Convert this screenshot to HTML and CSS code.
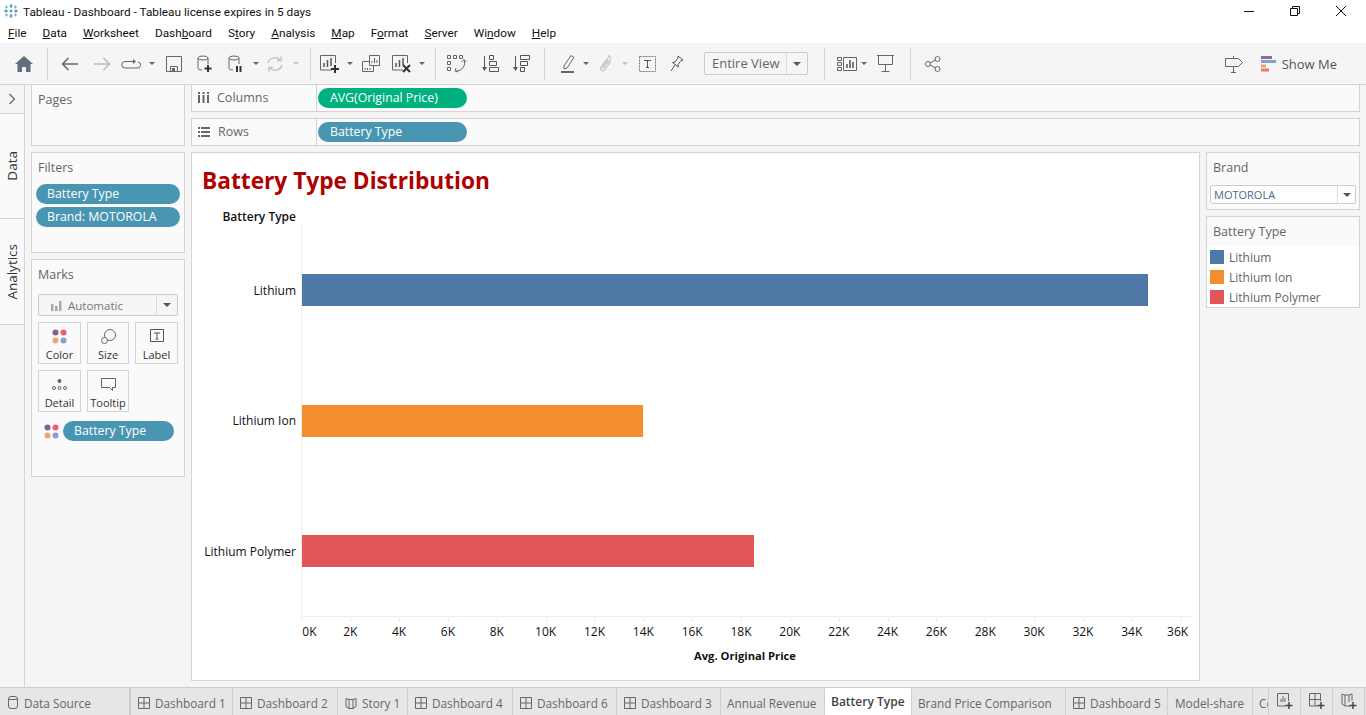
FILE: index.html
```html
<!DOCTYPE html>
<html lang="en">
<head>
  <meta charset="UTF-8">
  <title>Tableau - Dashboard - Tableau license expires in 5 days</title>
  <link rel="stylesheet" href="styles.css">
</head>
<body>
  <!-- window title -->
  <header class="titlebar">
    <svg class="app-icon" width="16" height="16" viewBox="0 0 16 16" fill="none" stroke="#2f7fa8" stroke-width="1">
      <path d="M8 1v4M6.500 3h3M8 11v4M6.500 13h3M1 8h4M3 6.500v3M11 8h4M13 6.500v3M8 6.500v3M6.500 8h3" />
      <path d="M3.500 2.500v3M2 4h3M12.500 2.500v3M11 4h3M3.500 10.500v3M2 12h3M12.500 10.500v3M11 12h3" stroke="#6fb0cf" />
    </svg>
    <span class="title-text">Tableau - Dashboard - Tableau license expires in 5 days</span>
    <div class="win-controls">
      <svg width="12" height="12" viewBox="0 0 12 12" stroke="#111" fill="none"><path d="M1 6.500h10" /></svg>
      <svg width="12" height="12" viewBox="0 0 12 12" stroke="#111" fill="none"><path d="M1.500 3.500h7v7h-7zM3.500 3.500v-2h7v7h-2" /></svg>
      <svg width="12" height="12" viewBox="0 0 12 12" stroke="#111" fill="none"><path d="M1 1l10 10M11 1L1 11" /></svg>
    </div>
  </header>

  <nav class="menubar">
    <span><u>F</u>ile</span>
    <span><u>D</u>ata</span>
    <span><u>W</u>orksheet</span>
    <span>Dash<u>b</u>oard</span>
    <span>S<u>t</u>ory</span>
    <span><u>A</u>nalysis</span>
    <span><u>M</u>ap</span>
    <span>F<u>o</u>rmat</span>
    <span><u>S</u>erver</span>
    <span>Wi<u>n</u>dow</span>
    <span><u>H</u>elp</span>
  </nav>

  <!-- toolbar -->
  <div class="toolbar">
    <span class="tool w30"><svg width="18" height="16" viewBox="0 0 18 16" fill="#5f6f7f"><path d="M9 0L0 8h2.500v8h4.500v-5h4v5h4.500V8H18z" /></svg></span>
    <i class="sep"></i>
    <span class="tool w36"><svg width="18" height="14" viewBox="0 0 18 14" fill="none" stroke="#666" stroke-width="1.500"><path d="M17 7H2M7.500 1L1.500 7l6 6" /></svg></span>
    <span class="tool w28"><svg width="18" height="14" viewBox="0 0 18 14" fill="none" stroke="#bbb" stroke-width="1.500"><path d="M1 7h15M10.500 1l6 6-6 6" /></svg></span>
    <span class="tool w30"><svg width="20" height="12" viewBox="0 0 20 12" fill="none" stroke="#666"><path d="M12 3.500H4a3 3 0 0 0 0 6.500h12a3 3 0 0 0 1-6" /><path d="M12 1l3 2.500L12 6z" fill="#666" stroke="none" /></svg></span>
    <span class="caret w12"></span>
    <span class="tool w32"><svg width="16" height="16" viewBox="0 0 16 16" fill="none" stroke="#666"><path d="M.5.500h15v15H.500zM4.500 15.500v-5h7v5" /><path d="M6 12h3v3H6z" fill="#666" stroke="none" /></svg></span>
    <span class="tool w30"><svg width="16" height="18" viewBox="0 0 16 18" fill="none" stroke="#666"><ellipse cx="6" cy="3" rx="5" ry="2" /><path d="M1 3v10c0 1 1 2 4 2M11 3v6" /><path d="M11 10v7M7.500 13.500h7" stroke="#333" stroke-width="2" /></svg></span>
    <span class="tool w32"><svg width="16" height="18" viewBox="0 0 16 18" fill="none" stroke="#666"><ellipse cx="6" cy="3" rx="5" ry="2" /><path d="M1 3v10c0 1 1 2 4 2M11 3v6" /><path d="M9 11v6M12.500 11v6" stroke="#333" stroke-width="2" /></svg></span>
    <span class="caret w8"></span>
    <span class="tool w30"><svg width="18" height="16" viewBox="0 0 18 16" fill="none" stroke="#c4c4c4" stroke-width="1.500"><path d="M2 7a7 6.500 0 0 1 12-3M16 9a7 6.500 0 0 1-12 3" /><path d="M15 .500v4h-4M3 15.500v-4h4" /></svg></span>
    <span class="caret w12 off"></span>
    <i class="sep"></i>
    <span class="tool w30"><svg width="21" height="20" viewBox="0 0 21 20" fill="none" stroke="#666"><path d="M12 16H.500V1.500h15V9" /><path d="M4 9v4M7.500 6v7M11 4v8" stroke="#555" stroke-width="1.500" /><path d="M15 11v8M11 15h8" stroke="#333" stroke-width="2" /></svg></span>
    <span class="caret w10"></span>
    <span class="tool w32"><svg width="18" height="17" viewBox="0 0 18 17" fill="none" stroke="#666"><path d="M.5 6.500h11v10H.500z" /><path d="M7.500.500h10v10h-10z" fill="#f5f5f5" /><path d="M10 8V6M12.500 8V3M15 8V5M3 15v-2M5.500 15v-2M8 15v-2" /></svg></span>
    <span class="tool w30"><svg width="21" height="20" viewBox="0 0 21 20" fill="none" stroke="#666"><path d="M11 16H.500V1.500h15V9" /><path d="M4 9v4M7.500 6v7M11 4v7" stroke="#555" stroke-width="1.500" /><path d="M11 11l7 7M18 11l-7 7" stroke="#333" stroke-width="2" /></svg></span>
    <span class="caret w10"></span>
    <i class="sep"></i>
    <span class="tool w34"><svg width="20" height="18" viewBox="0 0 20 18" fill="none" stroke="#666"><path d="M.5.500h3v3h-3zM6.500.500h3v3h-3zM12.500.500h3v3h-3zM.5 6.500h3v3h-3zM.5 12.500h3v3h-3z" /><path d="M17 5a8 8 0 0 1-8 11M9 13l-1 3 3 1M14.500 7L17 4.500 19.500 7" /></svg></span>
    <span class="tool w32"><svg width="18" height="17" viewBox="0 0 18 17" fill="none" stroke="#555"><path d="M3.500 1v14" /><path d="M1 12l2.500 4L6 12z" fill="#555" stroke="none" /><path d="M8.500.500h4v4h-4zM8.500 6.500h7v4h-7zM8.500 12.500h9v4h-9z" /></svg></span>
    <span class="tool w30"><svg width="18" height="17" viewBox="0 0 18 17" fill="none" stroke="#555"><path d="M3.500 1v14" /><path d="M1 12l2.500 4L6 12z" fill="#555" stroke="none" /><path d="M8.500.500h9v4h-9zM8.500 6.500h7v4h-7zM8.500 12.500h4v4h-4z" /></svg></span>
    <i class="sep sep-wide"></i>
    <span class="tool w28"><svg width="14" height="19" viewBox="0 0 14 19" fill="none" stroke="#666"><path d="M3 12L10 1.500l3 2L6 14l-3 1z" /><path d="M0 18h13" stroke-width="2" /></svg></span>
    <span class="caret w8"></span>
    <span class="tool w30"><svg width="13" height="18" viewBox="0 0 13 18" fill="none" stroke="#c4c4c4" stroke-width="1.200"><path d="M10 1.500L2 12c-1.500 2.500 1.500 5 3.500 3L12 6M9 1c2-.5 3 1.500 2.500 3L5 12.500c-1 1-2 0-1.500-1L9 5" /></svg></span>
    <span class="caret w10 off"></span>
    <span class="tool w34"><svg width="17" height="16" viewBox="0 0 17 16" fill="none" stroke="#777" stroke-dasharray="2 1"><path d="M.5.500h16v15H.500z" /><path d="M5 4.500h7M8.500 4.500v7M7 11.500h3" stroke-dasharray="none" stroke="#555" /></svg></span>
    <span class="tool w26"><svg width="14" height="17" viewBox="0 0 14 17" fill="none" stroke="#555"><path d="M8 1l5 4-2 .5-3 4 .5 2.500L2.500 7.500 5 7l3-4zM5 10l-4 6" /></svg></span>
    <div class="combo view-combo">
      <span class="combo-text">Entire View</span>
      <span class="combo-arrow"><b></b></span>
    </div>
    <i class="sep sep-chart"></i>
    <span class="tool w26"><svg width="20" height="14" viewBox="0 0 20 14" fill="none" stroke="#666"><path d="M.5.500h4v3h-4zM.5 5.500h4v3h-4zM.5 10.500h4v3h-4zM6.500.500h13v13h-13z" /><path d="M10 11V7M13 11V3M16 11V5" stroke-width="1.500" stroke="#555" /></svg></span>
    <span class="caret w8"></span>
    <span class="tool w34"><svg width="17" height="17" viewBox="0 0 17 17" fill="none" stroke="#666"><path d="M0 .500h17M1.500.500v9h14v-9M8.500 9.500v6.500M4.500 16.500h8" /></svg></span>
    <i class="sep sep-near"></i>
    <span class="tool w36"><svg width="16" height="16" viewBox="0 0 16 16" fill="none" stroke="#666"><circle cx="3" cy="8" r="2.500" /><circle cx="12.500" cy="3" r="2.500" /><circle cx="12.500" cy="13" r="2.500" /><path d="M5.200 6.800L10.300 4.200M5.200 9.200l5.100 2.600" /></svg></span>
    <div class="toolbar-right">
      <svg width="18" height="18" viewBox="0 0 18 18" fill="none" stroke="#666"><path d="M.5 3.500h13l4 4-4 4H.500zM8.500 1v2.500M8.500 11.500v6M6 17.500h5" /></svg>
      <div class="show-me">
        <svg width="15" height="16" viewBox="0 0 15 16">
          <rect width="11" height="3" fill="#8a6f98" />
          <rect y="4" width="15" height="3" fill="#7fa3cf" />
          <rect y="8.500" width="5" height="3" fill="#f0a070" />
          <rect y="12.500" width="8" height="3" fill="#f0757f" />
        </svg>
        <span>Show Me</span>
      </div>
    </div>
  </div>

  <div class="workspace">
    <!-- left rail -->
    <aside class="rail">
      <div class="rail-top"><svg width="8" height="12" viewBox="0 0 8 12" fill="none" stroke="#666" stroke-width="1.200"><path d="M1.500 1l5 5-5 5" /></svg></div>
      <div class="rail-tab rail-data"><span>Data</span></div>
      <div class="rail-tab rail-analytics"><span>Analytics</span></div>
    </aside>

    <!-- pages, filters, marks -->
    <section class="side">
      <div class="card pages-card"><h3>Pages</h3></div>
      <div class="card filters-card">
        <h3>Filters</h3>
        <div class="pill filter-pill">Battery Type</div>
        <div class="pill filter-pill">Brand: MOTOROLA</div>
      </div>
      <div class="card marks-card">
        <h3>Marks</h3>
        <div class="combo marks-combo">
          <span class="combo-text">
            <svg width="11" height="11" viewBox="0 0 11 11" fill="#aaa"><rect y="4" width="2.500" height="7" /><rect x="4" y="6" width="2.500" height="5" /><rect x="8" y="1" width="2.500" height="10" /></svg>
            Automatic
          </span>
          <span class="combo-arrow"><b></b></span>
        </div>
        <div class="marks-grid">
          <div class="mark-btn">
            <svg width="15" height="15" viewBox="0 0 15 15"><circle cx="3.500" cy="3.500" r="3" fill="#7d6591" /><circle cx="11.500" cy="3.500" r="3" fill="#ee5f6d" /><circle cx="3.500" cy="11.500" r="3" fill="#f2a36f" /><circle cx="11.500" cy="11.500" r="3" fill="#7fa3cb" /></svg>
            <span>Color</span>
          </div>
          <div class="mark-btn">
            <svg width="15" height="15" viewBox="0 0 15 15" fill="none" stroke="#666"><circle cx="9" cy="6" r="5.500" /><circle cx="3.500" cy="11.500" r="3" fill="#fafafa" /></svg>
            <span>Size</span>
          </div>
          <div class="mark-btn">
            <svg width="14" height="14" viewBox="0 0 14 14" fill="none" stroke="#555"><path d="M.5.500h13v12H.500zM4 4h6M7 4v6M5.500 10h3" /></svg>
            <span>Label</span>
          </div>
          <div class="mark-btn">
            <svg width="15" height="15" viewBox="0 0 15 15" fill="none" stroke="#666"><circle cx="7.500" cy="4" r="2" fill="#666" stroke="none" /><circle cx="2" cy="11" r="1.500" /><circle cx="7.500" cy="11" r="1.500" /><circle cx="13" cy="11" r="1.500" /></svg>
            <span>Detail</span>
          </div>
          <div class="mark-btn">
            <svg width="15" height="15" viewBox="0 0 15 15" fill="none" stroke="#666"><path d="M.5 1.500h14v9h-3v3l-3-3h-8z" /></svg>
            <span>Tooltip</span>
          </div>
        </div>
        <div class="marks-field">
          <svg width="15" height="15" viewBox="0 0 15 15"><circle cx="3.500" cy="3.500" r="3" fill="#7d6591" /><circle cx="11.500" cy="3.500" r="3" fill="#ee5f6d" /><circle cx="3.500" cy="11.500" r="3" fill="#f2a36f" /><circle cx="11.500" cy="11.500" r="3" fill="#7fa3cb" /></svg>
          <div class="pill marks-pill">Battery Type</div>
        </div>
      </div>
    </section>

    <section class="main">
      <!-- shelves -->
      <div class="shelf">
        <div class="shelf-label">
          <svg width="11" height="11" viewBox="0 0 11 11" fill="#666"><rect x="0" y="3" width="2" height="8" /><rect x="4.500" y="3" width="2" height="8" /><rect x="9" y="3" width="2" height="8" /><rect x="0" y="0" width="2" height="2" /><rect x="4.500" y="0" width="2" height="2" /><rect x="9" y="0" width="2" height="2" /></svg>
          Columns
        </div>
        <div class="pill shelf-pill green">AVG(Original Price)</div>
      </div>
      <div class="shelf">
        <div class="shelf-label">
          <svg width="12" height="10" viewBox="0 0 12 10" fill="#666"><rect width="2" height="2" /><rect x="3" width="9" height="2" /><rect y="4" width="2" height="2" /><rect x="3" y="4" width="9" height="2" /><rect y="8" width="2" height="2" /><rect x="3" y="8" width="9" height="2" /></svg>
          Rows
        </div>
        <div class="pill shelf-pill">Battery Type</div>
      </div>

      <div class="content">
        <!-- chart -->
        <div class="chart-card">
          <h1 class="chart-title">Battery Type Distribution</h1>
          <div class="row-header">Battery Type</div>
          <div class="plot">
            <div class="bar-row">
              <div class="bar-label">Lithium</div>
              <div class="bar-track"><div class="bar lithium" style="width: 846px"></div></div>
            </div>
            <div class="bar-row">
              <div class="bar-label">Lithium Ion</div>
              <div class="bar-track"><div class="bar ion" style="width: 341px"></div></div>
            </div>
            <div class="bar-row">
              <div class="bar-label">Lithium Polymer</div>
              <div class="bar-track"><div class="bar polymer" style="width: 452px"></div></div>
            </div>
          </div>
          <div class="axis">
            <span class="first">0K</span><span>2K</span><span>4K</span><span>6K</span><span>8K</span><span>10K</span><span>12K</span><span>14K</span><span>16K</span><span>18K</span><span>20K</span><span>22K</span><span>24K</span><span>26K</span><span>28K</span><span>30K</span><span>32K</span><span>34K</span><span class="last">36K</span>
          </div>
          <div class="axis-title">Avg. Original Price</div>
        </div>

        <!-- right legends -->
        <aside class="legends">
          <div class="card brand-card">
            <h3>Brand</h3>
            <div class="combo brand-combo">
              <span class="combo-text">MOTOROLA</span>
              <span class="combo-arrow"><b></b></span>
            </div>
          </div>
          <div class="card legend-card">
            <h3>Battery Type</h3>
            <ul class="legend-list">
              <li><i class="swatch lithium"></i>Lithium</li>
              <li><i class="swatch ion"></i>Lithium Ion</li>
              <li><i class="swatch polymer"></i>Lithium Polymer</li>
            </ul>
          </div>
        </aside>
      </div>
    </section>
  </div>

  <!-- sheet tabs -->
  <footer class="tabs">
    <div class="tab source-tab"><svg width="10" height="13" viewBox="0 0 10 13" fill="none" stroke="#666"><rect x=".5" y=".5" width="9" height="12" rx="2.500" /><path d="M.5 3.500h9" /></svg>Data Source</div>
    <div class="tab t102"><svg class="dash" viewBox="0 0 12 12"><path d="M.5.500h11v11H.500zM6 .500v11M.5 6h11" /></svg>Dashboard 1</div>
    <div class="tab t105"><svg class="dash" viewBox="0 0 12 12"><path d="M.5.500h11v11H.500zM6 .500v11M.5 6h11" /></svg>Dashboard 2</div>
    <div class="tab t70"><svg class="dash" viewBox="0 0 12 12"><path d="M1 1.500l3 1h4l3-1v8l-3 2H4l-3-2zM4 2.500v9M8 2.500v9" /></svg>Story 1</div>
    <div class="tab t105"><svg class="dash" viewBox="0 0 12 12"><path d="M.5.500h11v11H.500zM6 .500v11M.5 6h11" /></svg>Dashboard 4</div>
    <div class="tab t104"><svg class="dash" viewBox="0 0 12 12"><path d="M.5.500h11v11H.500zM6 .500v11M.5 6h11" /></svg>Dashboard 6</div>
    <div class="tab t104"><svg class="dash" viewBox="0 0 12 12"><path d="M.5.500h11v11H.500zM6 .500v11M.5 6h11" /></svg>Dashboard 3</div>
    <div class="tab t104 plain">Annual Revenue</div>
    <div class="tab active">Battery Type</div>
    <div class="tab t154 plain">Brand Price Comparison</div>
    <div class="tab t102"><svg class="dash" viewBox="0 0 12 12"><path d="M.5.500h11v11H.500zM6 .500v11M.5 6h11" /></svg>Dashboard 5</div>
    <div class="tab t85">Model-share</div>
    <div class="tab clipped">Comparison</div>
    <div class="tab new-tab"><svg width="17" height="17" viewBox="0 0 17 17" fill="none" stroke="#666"><path d="M9 13H.500V.500h11V8M4 9V6M6 9V3M8 9V5" /><path d="M12 9v7M8.500 12.500h7" stroke="#444" stroke-width="1.500" /></svg></div>
    <div class="tab new-tab"><svg width="17" height="17" viewBox="0 0 17 17" fill="none" stroke="#666"><path d="M9 13H.500V.500h11V8M6 .500V13M.5 6.500h11" /><path d="M12 9v7M8.500 12.500h7" stroke="#444" stroke-width="1.500" /></svg></div>
    <div class="tab new-tab"><svg width="17" height="17" viewBox="0 0 17 17" fill="none" stroke="#666"><path d="M9 13H4l-3-2V1l3 1h4l3-1v7M4 2v11M8 2v7" /><path d="M12 9v7M8.500 12.500h7" stroke="#444" stroke-width="1.500" /></svg></div>
  </footer>
</body>
</html>
```

FILE: styles.css
```css
* {
  box-sizing: border-box;
}

html, body {
  margin: 0;
  padding: 0;
  height: 715px;
  overflow: hidden;
}

body {
  font-family: "Open Sans", Arial, sans-serif;
  font-size: 12px;
  background-color: #f5f5f5;
  color: #666;
}

/* title + menu */
.titlebar {
  display: flex;
  align-items: center;
  height: 22px;
  background: #fff;
  color: #111;
  padding-left: 3px;
  font-family: Roboto, Arial, sans-serif;
  font-size: 11.800px;
}

.title-text {
  margin-left: 4px;
  padding-top: 1px;
}

.win-controls {
  margin-left: auto;
  display: flex;
  gap: 34px;
  padding-right: 19px;
}

.menubar {
  display: flex;
  align-items: center;
  gap: 16px;
  height: 21px;
  padding-left: 8px;
  background: #fff;
  color: #111;
  font-family: Roboto, Arial, sans-serif;
  font-size: 11.800px;
}

/* toolbar */
.toolbar {
  display: flex;
  align-items: center;
  height: 41px;
  padding-left: 9px;
  background: #f5f5f5;
}

.tool {
  display: flex;
  justify-content: center;
  align-items: center;
  height: 24px;
}

.w8 { width: 8px; }
.w10 { width: 10px; }
.w12 { width: 12px; }
.w26 { width: 26px; }
.w28 { width: 28px; }
.w30 { width: 30px; }
.w32 { width: 32px; }
.w34 { width: 34px; }
.w36 { width: 36px; }

.caret {
  position: relative;
  height: 24px;
}

.caret::after {
  content: "";
  position: absolute;
  left: 50%;
  top: 10px;
  margin-left: -3px;
  border-left: 3px solid transparent;
  border-right: 3px solid transparent;
  border-top: 3px solid #666;
}

.caret.off::after {
  border-top-color: #c4c4c4;
}

.sep {
  display: block;
  width: 1px;
  height: 32px;
  background: #d4d4d4;
  margin: 0 4px 0 8px;
}

.sep-wide {
  margin-right: 9px;
}

.sep-chart {
  margin: 0 9px 0 16px;
}

.sep-near {
  margin: 0 4px 0 8px;
}

.combo {
  display: flex;
  align-items: stretch;
  background: #fff;
  border: 1px solid #ccc;
  border-radius: 2px;
}

.combo-text {
  flex: 1;
  display: flex;
  align-items: center;
}

.combo-arrow {
  width: 21px;
  display: flex;
  justify-content: center;
  align-items: center;
  border-left: 1px solid #ddd;
}

.combo-arrow b {
  border-left: 4px solid transparent;
  border-right: 4px solid transparent;
  border-top: 4px solid #555;
}

.view-combo {
  width: 104px;
  height: 23px;
  margin-left: 14px;
  background: #f5f5f5;
  font-size: 13px;
}

.view-combo .combo-text {
  padding: 0 0 2px 7px;
}

.toolbar-right {
  margin-left: auto;
  display: flex;
  align-items: center;
  padding-right: 29px;
}

.show-me {
  display: flex;
  align-items: center;
  gap: 6px;
  margin-left: 18px;
  font-size: 13px;
  color: #555;
}

/* main area */
.workspace {
  display: flex;
  height: 603px;
  border-top: 1px solid #d4d4d4;
}

.rail {
  width: 25px;
  border-right: 1px solid #d4d4d4;
  color: #333;
  font-size: 13.500px;
}

.rail-top {
  height: 29px;
  display: flex;
  justify-content: center;
  align-items: center;
  border-bottom: 1px solid #d4d4d4;
}

.rail-tab {
  display: flex;
  justify-content: center;
  align-items: center;
  background: #fafafa;
  border-bottom: 1px solid #d4d4d4;
}

.rail-tab span {
  writing-mode: vertical-rl;
  transform: rotate(180deg);
}

.rail-data {
  height: 105px;
}

.rail-analytics {
  height: 106px;
}

.side {
  width: 154px;
  margin-left: 6px;
}

.card {
  background: #fafafa;
  border: 1px solid #d4d4d4;
}

.card h3 {
  margin: 0;
  font-size: 12.500px;
  font-weight: normal;
  color: #666;
}

.pages-card {
  height: 62px;
  margin-top: -1px;
  padding: 6px 6px;
}

.filters-card {
  height: 101px;
  margin-top: 6px;
  padding: 6px 4px;
}

.filters-card h3 {
  margin-left: 2px;
  margin-bottom: 8px;
}

.pill {
  display: flex;
  align-items: center;
  height: 20px;
  padding-bottom: 1px;
  background: #4996b2;
  color: #fff;
  border-radius: 10px;
  font-size: 12.300px;
}

.filter-pill {
  padding-left: 11px;
  margin-bottom: 3px;
}

.marks-card {
  height: 218px;
  margin-top: 6px;
  padding: 6px;
}

.marks-card h3 {
  margin-bottom: 11px;
}

.marks-combo {
  height: 22px;
  width: 140px;
  background: #f5f5f5;
  font-size: 11.500px;
  color: #777;
}

.marks-combo .combo-text {
  padding-left: 12px;
  gap: 6px;
}

.marks-grid {
  display: grid;
  grid-template-columns: 43px 42px 43px;
  grid-auto-rows: 42px;
  gap: 6px;
  margin-top: 6px;
}

.mark-btn {
  display: flex;
  flex-direction: column;
  align-items: center;
  justify-content: space-between;
  padding: 6px 0 1px;
  border: 1px solid #d4d4d4;
  color: #333;
  font-size: 11px;
  line-height: 14px;
}

.marks-field {
  display: flex;
  align-items: center;
  gap: 4px;
  margin: 9px 0 0 6px;
}

.marks-pill {
  width: 111px;
  padding-left: 11px;
}

.main {
  flex: 1;
  margin: 0 6px;
  min-width: 0;
}

.shelf {
  display: flex;
  align-items: center;
  height: 28px;
  margin-top: -1px;
  margin-bottom: 7px;
  background: #fafafa;
  border: 1px solid #d4d4d4;
}

.shelf-label {
  display: flex;
  align-items: center;
  gap: 8px;
  width: 125px;
  height: 100%;
  padding: 0 0 1px 6px;
  border-right: 1px solid #d4d4d4;
  font-size: 12.500px;
}

.shelf-pill {
  width: 149px;
  margin-left: 1px;
  padding-left: 12px;
}

.green {
  background: #00b180;
}

.content {
  display: flex;
  gap: 6px;
  margin-top: -1px;
}

/* chart */
.chart-card {
  width: 1009px;
  height: 529px;
  background: #fff;
  border: 1px solid #d4d4d4;
  color: #111;
}

.chart-title {
  margin: 12px 0 0 10px;
  font-size: 22.700px;
  line-height: 32px;
  font-weight: 700;
  color: #b00000;
}

.row-header {
  width: 104px;
  margin-top: 12px;
  text-align: right;
  font-size: 12px;
  font-weight: 600;
  line-height: 16px;
}

.plot {
  height: 392px;
}

.bar-row {
  display: flex;
  height: 130.500px;
}

.bar-label {
  width: 104px;
  align-self: center;
  text-align: right;
  font-size: 12px;
}

.bar-track {
  flex: 1;
  display: flex;
  align-items: center;
  margin-left: 5px;
  margin-right: 8px;
  border-left: 1px solid #eee;
}

.plot .bar-row:last-child .bar-track {
  border-bottom: 1px solid #eee;
}

.bar {
  height: 32px;
}

.lithium { background: #4e79a7; }
.ion { background: #f28e2b; }
.polymer { background: #e15759; }

.axis {
  display: flex;
  margin-left: 85px;
  margin-top: 7px;
  font-size: 12px;
  line-height: 16px;
}

.axis span {
  position: relative;
  flex: none;
  width: 48.850px;
  text-align: center;
}

.axis span::before {
  content: "";
  position: absolute;
  left: 50%;
  top: -7px;
  width: 1px;
  height: 5px;
  background: #eee;
}

.axis .first {
  left: 8px;
}

.axis .first::before {
  left: calc(50% - 8px);
}

.axis .last {
  left: -3px;
}

.axis .last::before {
  left: calc(50% + 3px);
}

.axis-title {
  width: 1007px;
  margin-top: 8px;
  padding-left: 99px;
  font-size: 11.200px;
  font-weight: 700;
  line-height: 16px;
  text-align: center;
}

/* legends */
.legends {
  flex: 1;
  min-width: 0;
}

.brand-card {
  height: 58px;
  padding: 6px 3px;
}

.brand-card h3,
.legend-card h3 {
  margin-left: 3px;
  line-height: 18px;
}

.brand-combo {
  height: 19px;
  margin-top: 8px;
  font-size: 11px;
  color: #4a6a8a;
}

.brand-combo .combo-text {
  padding-left: 3px;
}

.brand-combo .combo-arrow {
  width: 18px;
}

.legend-card {
  height: 92px;
  margin-top: 6px;
  background: #fff;
}

.legend-card h3 {
  height: 29px;
  margin: 0;
  padding: 6px 0 0 6px;
  background: #fafafa;
}

.legend-list {
  list-style: none;
  margin: 0;
  padding: 1px 0 0 3px;
}

.legend-list li {
  display: flex;
  align-items: center;
  height: 20px;
  gap: 5px;
  font-size: 12px;
}

.swatch {
  width: 14px;
  height: 14px;
}

/* tabs */
.tabs {
  display: flex;
  height: 28px;
  background: #e6e6e6;
  border-top: 1px solid #ccc;
  overflow: hidden;
}

.tab {
  display: flex;
  align-items: center;
  flex: none;
  gap: 5px;
  padding: 2px 0 0 7px;
  border-right: 1px solid #d0d0d0;
  font-size: 11.800px;
  white-space: nowrap;
  overflow: hidden;
}

.dash {
  width: 12px;
  height: 12px;
  fill: none;
  stroke: #666;
}

.source-tab {
  width: 131px;
  padding-left: 8px;
  gap: 6px;
  border-right: 2px solid #ccc;
}

.t70 { width: 70px; }
.t85 { width: 85px; }
.t102 { width: 102px; }
.t104 { width: 104px; }
.t105 { width: 105px; }
.t154 { width: 154px; }

.plain {
  padding-left: 6px;
}

.active {
  width: 87px;
  padding: 0 0 0 6px;
  background: #fff;
  color: #444;
  font-size: 12px;
  font-weight: 600;
}

.clipped {
  width: 16px;
  padding-left: 6px;
}

.new-tab {
  width: 32px;
  padding: 0 0 0 8px;
}
```
